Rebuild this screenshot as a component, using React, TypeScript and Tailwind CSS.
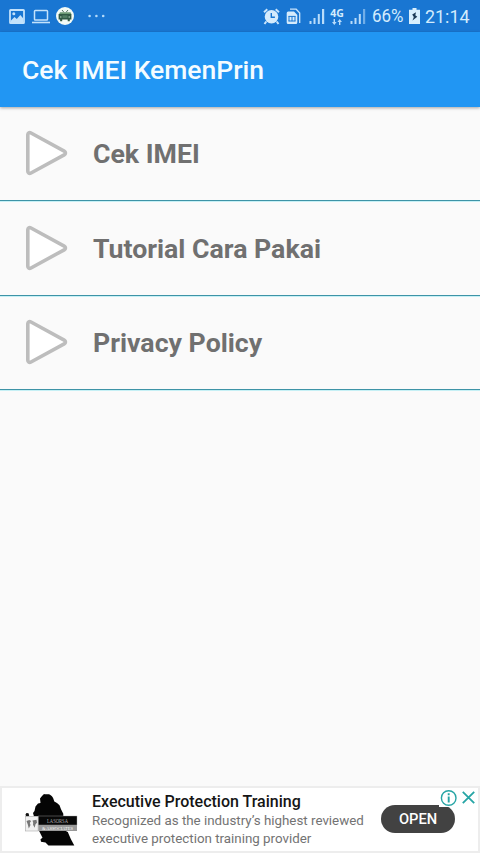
import React from 'react';

const MENU_ITEMS = ['Cek IMEI', 'Tutorial Cara Pakai', 'Privacy Policy'];

// Ascending bars, the last one is dimmed when the signal is weak
const SignalIcon: React.FC<{ level: number }> = ({ level }) => (
  <svg width="16" height="16" viewBox="0 0 16 16" fill="#b9dcfa">
    <rect x="0.5" y="13" width="2" height="3" />
    <rect x="4.5" y="10" width="2" height="6" />
    <rect x="8.8" y="6" width="2" height="10" />
    <rect x="13" y="1" width="2.2" height="15" opacity={level > 3 ? 1 : 0.55} />
  </svg>
);

const StatusBar: React.FC = () => (
  <div className="flex h-8 items-center bg-[#1976d2] pr-[10px] pl-[9px] text-[#d3ecfd]">
    {/* Notifications */}
    <svg width="16" height="15" viewBox="0 0 16 15">
      <rect x="1" y="1" width="14" height="13" rx="0.6" fill="none" stroke="#c3e2fb" strokeWidth="1.8" />
      <circle cx="4.8" cy="4.7" r="1.5" fill="#c3e2fb" />
      <path d="M2 11.5 5.5 8l2.3 2L11.3 6l3 3.5V13H2Z" fill="#c3e2fb" />
    </svg>
    <svg className="ml-[7px]" width="18" height="15" viewBox="0 0 18 15" fill="none" stroke="#c3e2fb" strokeWidth="1.5">
      <rect x="2.5" y="1.5" width="13" height="9.5" rx="0.8" />
      <path d="M0 13.5h18" strokeWidth="1.6" />
    </svg>
    <svg className="ml-[6px]" width="18" height="18" viewBox="0 0 18 18">
      <circle cx="9" cy="9" r="9" fill="#f3fbf6" />
      <path d="M6 3 8 5.4M12 3 10 5.4" stroke="#446650" strokeWidth="0.9" />
      <path d="M4 5.2h10.5l1 2H3Z" fill="#6c9a74" />
      <path d="M2.6 7h12.8v5.6H13.8v1.6h-2.1v-1.6H6.2v1.6H4.1v-1.6H2.6Z" fill="#315a45" />
      <path d="M6.5 8.3h5v2.6h-5Z" fill="#507e62" />
      <path d="M4 10h1.5M12.5 10h1.5" stroke="#c0dcc8" strokeWidth="1.2" />
    </svg>
    <svg className="ml-[14px]" width="17" height="4" viewBox="0 0 17 4" fill="#b3dafa">
      <circle cx="1.6" cy="2" r="1.3" />
      <circle cx="8.4" cy="2" r="1.3" />
      <circle cx="15.2" cy="2" r="1.3" />
    </svg>

    {/* System icons */}
    <svg className="ml-auto" width="17" height="17" viewBox="0 0 17 17">
      <path d="M3.3 13.5 1.5 16M13.7 13.5l1.8 2.5M1 4.2 4.3 1.3M16 4.2l-3.3-2.9" stroke="#c9e4fb" strokeWidth="2" />
      <circle cx="8.5" cy="8.8" r="6.8" fill="#d5ebfc" />
      <path d="M8.3 5v4.2h3.6" fill="none" stroke="#1976d2" strokeWidth="1.4" />
    </svg>
    <svg className="ml-[6px]" width="15" height="17" viewBox="0 0 15 17">
      <path d="M4 1.2h6.2L13.7 5v10" fill="none" stroke="#c9e4fb" strokeWidth="1.3" />
      <path d="M2.2 3.5H8L11.3 7v7.5a1.5 1.5 0 0 1-1.5 1.5H2.2a1.5 1.5 0 0 1-1.5-1.5V5a1.5 1.5 0 0 1 1.5-1.5Z" fill="#d5ebfc" />
      <path d="M3 8.2v5M6 8.2v5M9 8.2v5M2.5 8.4h7M2.5 13h7" fill="none" stroke="#1976d2" strokeWidth="1" />
    </svg>
    <div className="ml-[8px] flex">
      <SignalIcon level={4} />
    </div>
    <div className="ml-[5px] flex w-[14px] flex-col items-center">
      <span className="font-['Noto_Sans'] text-[10.5px] leading-[10px] font-bold">4G</span>
      <svg className="mt-px" width="10" height="6" viewBox="0 0 10 6" fill="#b9dcfa">
        <path d="M2.3 6 0 3h1.6V0H3v3h1.6ZM7.7 0 10 3H8.4v3H7V3H5.4Z" />
      </svg>
    </div>
    <div className="ml-[6px] flex">
      <SignalIcon level={3} />
    </div>
    <span className="ml-[6px] w-[32px] text-[18px] leading-none">
      <span className="inline-block origin-left scale-x-[0.94]">66%</span>
    </span>
    <svg className="ml-[5px]" width="11" height="16" viewBox="0 0 11 16">
      <path d="M3.5 0h4v1.8H11V16H0V1.8h3.5Z" fill="#d8effd" />
      <path d="M7 4.2 3.2 6.5 4.8 9 3.5 12.5 8.3 8.8 6.3 7.2Z" fill="#1d3b57" />
    </svg>
    <span className="ml-[5px] w-[45px] text-[19px] leading-none">
      <span className="inline-block origin-left scale-x-[0.94]">21:14</span>
    </span>
  </div>
);

const MenuRow: React.FC<{ label: string }> = ({ label }) => (
  <li className="flex h-[94.5px] items-center border-b border-[#3d93a6] pl-[25px] shadow-[0_1px_0_#c6f0f5]">
    <svg width="43" height="46" viewBox="0 0 43 46" fill="#fff" stroke="#bdbdbd" strokeWidth="3.6" strokeLinejoin="round">
      <path d="M2.8 4.8v36.4c0 2 1.6 2.7 3.2 1.8l33.2-18.2c1.7-.9 1.7-2.7 0-3.6L6 3C4.4 2.1 2.8 2.8 2.8 4.8Z" />
    </svg>
    <span className="ml-[25px] pt-[2.5px] text-[26.7px] font-bold text-[#707070]">{label}</span>
  </li>
);

const AdLogo: React.FC = () => (
  <svg width="53" height="54" viewBox="0 0 53 54">
    <path
      d="M19 1c2 .8 4.5-.5 6 .8 1.5 1 2.5 2 3.3 3.7l1 3 2.7 1.5 2.5 2.2 1.5 4 2.3 4.5v16l4.5 2.300 3 7 3.5 6.500H23.500l-3-3-4.500-.8-.5-2.500 2-1.500-2-4-1.500-3V23.500H9l-1-3.500 1.500-2 1-4.500 2.500-3 2.500-.5-.5-4.500 2-2.500Z"
      fill="#050505"
    />
    <path d="M.5 21.5 1.5 20l2 .3.7 2.2-1 1H1Z" fill="#111" />
    <rect x="0.4" y="23.3" width="12.7" height="14.7" fill="#f1f1f1" stroke="#aaa" strokeWidth="0.6" />
    <path d="m1.500 28 2.800-1 1.800 1-1.300 2 .7 2-1.700 3.500-1-4ZM7.500 27.500l4-.8.5 3-1.500 1.500-.8 3.500-1.700-3 .2-2Z" fill="#777" />
    <rect x="13.3" y="23" width="38.7" height="9" fill="#080808" stroke="#aaa" strokeWidth="0.4" />
    <rect x="13.3" y="32" width="38.7" height="6" fill="#999" />
    <text x="32.5" y="29.6" textAnchor="middle" textLength="21" lengthAdjust="spacingAndGlyphs" fontSize="5.5" fill="#aaa" fontFamily="Liberation Serif, serif">LASORSA</text>
    <text x="32.5" y="36.7" textAnchor="middle" textLength="31" lengthAdjust="spacingAndGlyphs" fontSize="4.8" fill="#fff" fontFamily="Liberation Serif, serif">&amp; ASSOCIATES</text>
  </svg>
);

const AdBanner: React.FC = () => (
  <div className="relative flex h-[67px] border-2 border-[#ededed] bg-white pl-[23px]">
    <div className="pt-[5px]">
      <AdLogo />
    </div>
    <div className="ml-[14px] pt-[4px] whitespace-nowrap">
      <p className="text-[16px] leading-[19px] font-medium text-[#151515]">Executive Protection Training</p>
      <p className="pt-px text-[13.35px] leading-[17.5px] text-[#737373]">
        Recognized as the industry’s highest reviewed
        <br />
        executive protection training provider
      </p>
    </div>
    <button className="absolute top-[17px] left-[379px] h-[28px] w-[74px] rounded-full bg-[#424242] pt-px text-[14.7px] font-medium text-white">
      OPEN
    </button>
    {/* Ad choices */}
    <div className="absolute top-0 right-0 flex h-[19px] w-[39px] items-center justify-between bg-white pr-[3px] pl-px">
      <svg width="18" height="18" viewBox="0 0 18 18" fill="none" stroke="#26a5a5">
        <circle cx="8.7" cy="9" r="7.3" strokeWidth="1.4" />
        <path d="M8.7 7.5V13.5M8.7 4.3v1.9" strokeWidth="1.9" />
      </svg>
      <svg width="13" height="13" viewBox="0 0 13 13" stroke="#26a5a5" strokeWidth="1.8">
        <path d="m.8.8 11.4 11.4M12.2.8.8 12.2" />
      </svg>
    </div>
  </div>
);

const App: React.FC = () => {
  return (
    <div className="flex h-[853px] w-[480px] flex-col overflow-hidden bg-[#fafafa] font-[Roboto,sans-serif]">
      <StatusBar />
      <header className="z-10 flex h-[74.5px] items-center bg-[#2196f3] pt-[2px] pl-[22px] shadow-[0_1px_3px_rgba(0,0,0,0.35)]">
        <h1 className="text-[26.5px] font-medium text-[#f4fcff]">Cek IMEI KemenPrin</h1>
      </header>
      <ul className="flex-1">
        {MENU_ITEMS.map(label => (
          <MenuRow key={label} label={label} />
        ))}
      </ul>
      <AdBanner />
    </div>
  );
};

export default App;
